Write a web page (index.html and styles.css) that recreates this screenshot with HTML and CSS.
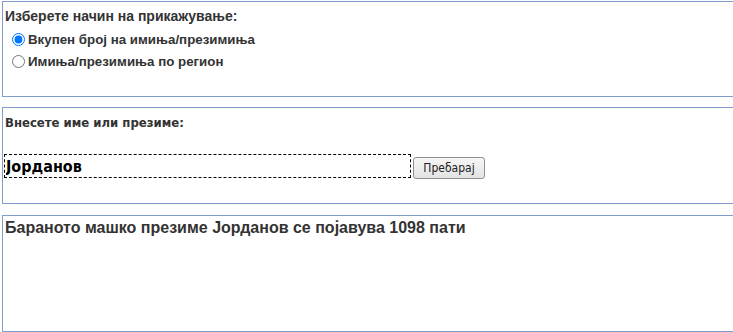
FILE: index.html
```html
<!DOCTYPE html>
<html lang="mk">
<head>
<meta charset="utf-8">
<title>Пребарување имиња</title>
<link rel="stylesheet" href="styles.css">
</head>
<body>
<div class="page">
  <div class="box box-mode">
    <div class="heading">Изберете начин на прикажување:</div>
    <div class="opts">
      <label class="opt"><input type="radio" name="mode" checked><span class="opt-text">Вкупен број на имиња/презимиња</span></label>
      <label class="opt"><input type="radio" name="mode"><span class="opt-text">Имиња/презимиња по регион</span></label>
    </div>
  </div>
  <div class="box box-search">
    <div class="heading heading-t">Внесете име или презиме:</div>
    <div class="search-row">
      <input class="name-input" type="text" value="Јорданов">
      <button class="search-btn" type="button">Пребарај</button>
    </div>
  </div>
  <div class="box box-result">
    <div class="result">Бараното машко презиме Јорданов се појавува 1098 пати</div>
  </div>
</div>
</body>
</html>
```

FILE: styles.css
```css
html, body {
  margin: 0;
  padding: 0;
  overflow: hidden;
  background: #fff;
}
.page {
  padding: 1px 0 0 2px;
  display: flex;
  flex-direction: column;
}
.box {
  border: 1px solid #7f9dca;
  border-right: none;
  width: 760px;
  box-sizing: border-box;
  color: #333;
  font-family: "Liberation Sans", Arial, sans-serif;
}
.box-mode {
  height: 96px;
  padding: 6px 0 0 2px;
}
.box-search {
  height: 97px;
  margin-top: 10px;
  padding: 7px 0 0 2px;
}
.box-result {
  height: 117px;
  margin-top: 11px;
  padding: 2px 0 0 2px;
}
.heading {
  font-size: 14px;
  font-weight: bold;
  line-height: 16px;
}
.heading-t {
  font-family: "DejaVu Sans Condensed", "DejaVu Sans", sans-serif;
  font-size: 13px;
}
.opts {
  margin-top: 4px;
}
.opt {
  display: flex;
  align-items: center;
  height: 22px;
  font-size: 13.3px;
  font-weight: bold;
}
.opt input {
  margin: 0 3px 0 7px;
  width: 13px;
  height: 13px;
}
.search-row {
  display: flex;
  align-items: flex-end;
  gap: 2px;
  margin-top: 23px;
  margin-left: -1px;
}
.name-input {
  width: 407px;
  height: 24px;
  box-sizing: border-box;
  border: 1px dashed #000;
  padding: 0 1px;
  margin: 0;
  font-family: "DejaVu Sans Condensed", "DejaVu Sans", sans-serif;
  font-weight: bold;
  font-size: 16px;
  color: #000;
  outline: none;
  background: #fff;
}
.search-btn {
  width: 72px;
  height: 22px;
  margin: 0 0 -1px 0;
  padding: 0;
  border: 1px solid #8f8f8f;
  border-radius: 3px;
  background: linear-gradient(#f6f6f6, #e3e3e3);
  font-family: "DejaVu Sans Condensed", "DejaVu Sans", sans-serif;
  font-size: 12px;
  color: #222;
}
.result {
  font-size: 16px;
  font-weight: bold;
  line-height: 19px;
}
```
